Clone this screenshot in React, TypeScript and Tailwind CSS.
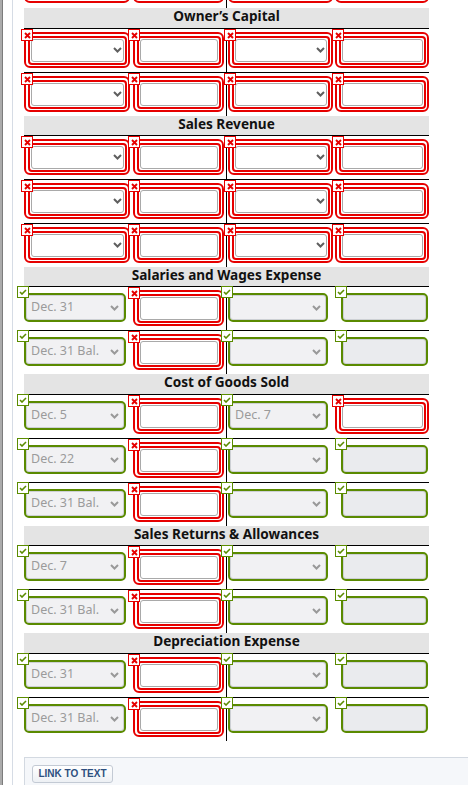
import React from 'react';

type Kind = 'select' | 'input';
type Cell = { kind: Kind; ok: boolean; text?: string };

// column boxes, measured off the reference (x: 24 / 131 / 227 / 333)
const colCls = ['w-[107px]', 'w-[96px] border-r border-black', 'w-[106px]', 'w-[96px]'];
const redBox = ['ml-0 w-[106px]', 'ml-[2px] w-[91px]', 'ml-[1px] w-[105px]', 'ml-[2px] w-[94px]'];
const redIcon = ['-left-[3px]', '-left-[3px]', '-left-[3px]', '-left-[1px]'];
const okBox = ['ml-0 w-[102px]', 'ml-[2px] w-[91px]', 'ml-[1px] w-[100px]', 'ml-[8px] w-[87px]'];
const okIcon = ['-left-[7px]', '-left-[3px]', '-left-[6px]', 'left-[2px]'];

const bad = (kind: Kind): Cell => ({ kind, ok: false });
const good = (kind: Kind, text = ''): Cell => ({ kind, ok: true, text });

const allRed: Cell[] = [bad('select'), bad('input'), bad('select'), bad('input')];
const posted = (date: string): Cell[] => [good('select', date), bad('input'), good('select'), good('input')];

const sections: { title: string; head: string; rows: Cell[][] }[] = [
  { title: 'Owner’s Capital', head: 'h-[20px]', rows: [allRed, allRed] },
  { title: 'Sales Revenue', head: 'h-[19px]', rows: [allRed, allRed, allRed] },
  { title: 'Salaries and Wages Expense', head: 'h-[19px]', rows: [posted('Dec. 31'), posted('Dec. 31 Bal.')] },
  {
    title: 'Cost of Goods Sold',
    head: 'h-[20px]',
    rows: [
      [good('select', 'Dec. 5'), bad('input'), good('select', 'Dec. 7'), bad('input')],
      posted('Dec. 22'),
      posted('Dec. 31 Bal.'),
    ],
  },
  { title: 'Sales Returns & Allowances', head: 'h-[19px]', rows: [posted('Dec. 7'), posted('Dec. 31 Bal.')] },
  { title: 'Depreciation Expense', head: 'h-[20px]', rows: [posted('Dec. 31'), posted('Dec. 31 Bal.')] },
];

function Chevron({ color }: { color: string }) {
  return (
    <svg width="9" height="6" viewBox="0 0 9 6" className="shrink-0">
      <path d="M1 1l3.5 3.5L8 1" fill="none" stroke={color} strokeWidth="2" />
    </svg>
  );
}

function Badge({ ok, pos }: { ok: boolean; pos: string }) {
  return (
    <div
      className={`absolute z-10 flex h-[12px] w-[12px] items-center justify-center border bg-white ${
        ok ? '-top-[1px] border-[#5b8c00]' : 'top-0 border-[#e60000]'
      } ${pos}`}
    >
      {ok ? (
        <svg width="8" height="6" viewBox="0 0 8 6">
          <path d="M1 3l2 2 4-4" fill="none" stroke="#5b8c00" strokeWidth="1.6" />
        </svg>
      ) : (
        <svg width="7" height="7" viewBox="0 0 7 7">
          <path d="M1 1l5 5M6 1L1 6" stroke="#e60000" strokeWidth="1.9" />
        </svg>
      )}
    </div>
  );
}

function Field({ cell, col }: { cell: Cell; col: number }) {
  if (!cell.ok) {
    return (
      <div className={`relative ${colCls[col]}`}>
        <Badge ok={false} pos={redIcon[col]} />
        <div className={`mt-[3px] h-[36px] rounded-[6px] border-2 border-[#e60000] bg-white p-[1.5px] ${redBox[col]}`}>
          <div className="h-full rounded-[4px] border-2 border-[#e60000] p-[1px]">
            <div className="flex h-full items-center justify-end rounded-[3px] border border-[#a9a9a9] pr-[1px]">
              {cell.kind === 'select' && <Chevron color="#5f5f5f" />}
            </div>
          </div>
        </div>
      </div>
    );
  }

  return (
    <div className={`relative ${colCls[col]}`}>
      <Badge ok pos={okIcon[col]} />
      <div
        className={`mt-[6px] flex h-[29px] items-center justify-between rounded-[5px] border-2 border-[#5a8a00] pl-[5px] pr-[5px] shadow-[inset_0_0_0_1px_#cdd0d4] ${
          cell.kind === 'select' ? 'bg-[#f1f1f3]' : 'bg-[#eaebee]'
        } ${okBox[col]}`}
      >
        <span className="whitespace-nowrap text-[12.5px] text-[#9b9b9b]">{cell.text}</span>
        {cell.kind === 'select' && <Chevron color="#999999" />}
      </div>
    </div>
  );
}

function Row({ cells, className = '' }: { cells: Cell[]; className?: string }) {
  return (
    <div className={`flex h-[44px] shrink-0 border-t border-black ${className}`}>
      {cells.map((c, i) => (
        <Field key={i} cell={c} col={i} />
      ))}
    </div>
  );
}

export default function App() {
  return (
    <div className="flex min-h-[785px] bg-white font-['Noto_Sans',sans-serif]">
      <div className="w-[2px] shrink-0 bg-[#ababab]" />
      <div className="w-[1px] shrink-0 bg-[#7c7c7c]" />
      <div className="w-[9px] shrink-0 bg-white" />
      <div className="w-[1px] shrink-0 bg-[#d6dce5]" />

      <div className="flex-1 pl-[11px]">
        <div className="w-[405px]">
          {/* tail of the account above, scrolled off */}
          <div className="flex h-[8px] flex-col justify-end overflow-hidden">
            <Row cells={allRed} className="border-t-0" />
          </div>

          {sections.map((s) => (
            <div key={s.title}>
              <div className={`${s.head} bg-[#e4e4e4] text-center text-[13.6px] font-bold leading-[16px] text-[#111]`}>
                {s.title}
              </div>
              {s.rows.map((r, i) => (
                <Row key={i} cells={r} />
              ))}
            </div>
          ))}
        </div>

        <div className="mt-[16px] flex h-[40px] items-start border-l border-t border-[#d3d9e1] bg-[#f5f7fa] px-[7px] pt-[7px]">
          <button
            type="button"
            className="block h-[18px] w-[81px] rounded-[3px] border border-[#c3cad4] bg-gradient-to-b from-white to-[#edf0f4] text-center font-['Liberation_Sans',Arial,sans-serif] text-[10px] font-bold leading-[16px] text-[#2d4f80]"
          >
            LINK TO TEXT
          </button>
        </div>
      </div>
    </div>
  );
}
